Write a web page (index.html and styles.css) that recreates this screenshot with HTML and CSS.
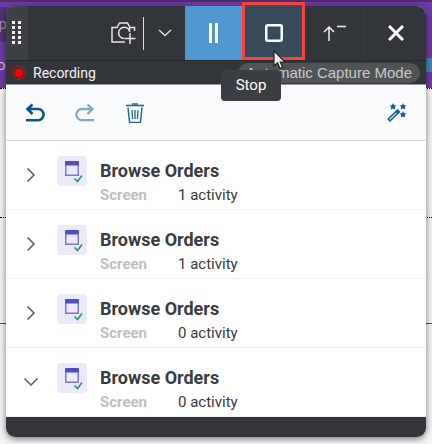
FILE: index.html
```
<!DOCTYPE html>
<html lang="en">
<head>
<meta charset="utf-8">
<title>Recorder</title>
<link rel="stylesheet" href="styles.css">
</head>
<body>
<svg class="defs" aria-hidden="true">
  <symbol id="screen" viewBox="0 0 30 30">
    <path d="M8.750 8v11.250h12.500V8" fill="none" stroke="#7b78cc" stroke-width="1.500"/>
    <rect x="8" y="5" width="14" height="4.500" rx="1" fill="#5050bd"/>
    <path d="M17.500 22.500l3 3 4.500-6" fill="none" stroke="#ebe9f9" stroke-width="4"/>
    <path d="M17.500 22.500l3 3 4.500-6" fill="none" stroke="#309765" stroke-width="1.700"/>
  </symbol>
  <symbol id="chevron" viewBox="0 0 16 16"><path d="M4.500 1.500l6.500 6.500-6.500 6.500" fill="none" stroke="currentColor" stroke-width="1.500"/></symbol>
</svg>
<div class="backdrop" aria-hidden="true">
  <div class="banner"><span class="crumb">pp</span><span class="word">o</span><i></i></div>
  <div class="band"></div>
  <div class="band blue"></div>
</div>
<main class="recorder">
  <header class="controls">
    <button class="handle" aria-label="Move">
      <svg width="12" height="24" viewBox="0 0 12 24"><path d="M2.500 0v24M8.500 0v24" stroke="#f3f3f3" stroke-width="3" stroke-dasharray="3 2"/></svg>
    </button>
    <div class="capture">
      <button aria-label="Capture screen">
        <svg width="26" height="24" viewBox="0 0 26 24" fill="none" stroke="#e5e5e5" stroke-width="1.500"><path d="M15 21H2V6.500h5L9.500 2h8L20 6.500h4.500V10"/><path d="M19.500 10A5.600 5.600 0 1 0 14 17.500M19.500 7v4"/><path d="M20 12v11M14.500 17.500h11"/></svg>
      </button>
      <span class="rule"></span>
      <button aria-label="Capture options"><svg width="14" height="8" viewBox="0 0 14 8"><path d="M1 1l6 5.500L13 1" fill="none" stroke="#e0e0e0" stroke-width="1.400"/></svg></button>
    </div>
    <button class="pause" aria-label="Pause"><svg width="12" height="20"><path d="M2.500 0v20M8.500 0v20" stroke="#fff" stroke-width="3"/></svg></button>
    <div class="stop-cell">
      <button class="stop" aria-label="Stop" aria-describedby="tip"><svg width="18" height="18"><rect x="1.250" y="1.250" width="15.500" height="15.500" rx="1.500" fill="none" stroke="#fff" stroke-width="2.500"/></svg></button>
      <div class="highlight"></div>
      <div class="tip" id="tip" role="tooltip">Stop</div>
      <svg class="pointer" width="13" height="20" viewBox="0 0 13 20"><path d="M1 1v15l3.500-3.300L7 18.500l2.700-1.200L7.200 12H12z" fill="#eee" stroke="#222" stroke-width="1.200"/></svg>
    </div>
    <button class="minimise" aria-label="Minimise"><svg width="24" height="16" viewBox="0 0 24 16"><path d="M6 16V2M1 7l5-5 5 5M14 1.500h9" fill="none" stroke="#f0f0f0" stroke-width="1.500"/></svg></button>
    <button aria-label="Close"><svg width="16" height="16" viewBox="0 0 16 16"><path d="M1 1l14 14M15 1L1 15" stroke="#fff" stroke-width="3"/></svg></button>
  </header>
  <div class="status">
    <svg width="14" height="14" viewBox="0 0 14 14"><circle cx="7" cy="7" r="6.400" fill="none" stroke="#d80d0d"/><circle cx="7" cy="7" r="4.300" fill="#f00"/></svg>
    <span>Recording</span>
    <span class="mode">Automatic Capture Mode</span>
  </div>
  <div class="tools">
    <button aria-label="Undo"><svg width="20" height="20" viewBox="0 0 20 20"><path d="M7.500 1.500L2.500 6l5 5M2.500 6H13a5.300 5.300 0 0 1 0 11.200H1" fill="none" stroke="#0a5584" stroke-width="2.600"/></svg></button>
    <button aria-label="Redo"><svg width="20" height="20" viewBox="0 0 20 20"><path d="M12.500 1.500l5 4.500-5 5M17.500 6H7a5.300 5.300 0 0 0 0 11.200h12" fill="none" stroke="#85a5c5" stroke-width="2.300"/></svg></button>
    <button aria-label="Delete"><svg width="20" height="20" viewBox="0 0 20 20" fill="none" stroke="#24658f"><path d="M1 2.500h18" stroke-width="1.600"/><path d="M7 1h6" stroke-width="1.500"/><path d="M3 4.500l1.600 15h10.800l1.600-15" stroke-width="1.500"/><path d="M7 7l.6 9M10 7v9M13 7l-.6 9" stroke-width="1.300"/></svg></button>
    <button class="wand" aria-label="Highlight"><svg width="20" height="20" viewBox="0 0 20 20"><path d="M1.500 17.500L12 7.500" stroke="#0e5787" stroke-width="4"/><path d="M2.500 16.500L9.500 10" stroke="#c7d9e8" stroke-width="1.300"/><g fill="#0e5787"><path id="star" d="M6 0l1 2.200 2.500.3-1.800 1.600.5 2.500L6 5.400 3.800 6.600l.5-2.500-1.800-1.600L5 2.200z"/><use href="#star" x="10"/><use href="#star" x="10" y="8"/></g></svg></button>
  </div>
  <ul class="list">
    <li><button aria-label="Expand"><svg width="16" height="16"><use href="#chevron"/></svg></button><svg class="tile"><use href="#screen"/></svg><div><h2>Browse Orders</h2><p><b>Screen</b><span>1 activity</span></p></div></li>
    <li><button aria-label="Expand"><svg width="16" height="16"><use href="#chevron"/></svg></button><svg class="tile"><use href="#screen"/></svg><div><h2>Browse Orders</h2><p><b>Screen</b><span>1 activity</span></p></div></li>
    <li><button aria-label="Expand"><svg width="16" height="16"><use href="#chevron"/></svg></button><svg class="tile"><use href="#screen"/></svg><div><h2>Browse Orders</h2><p><b>Screen</b><span>0 activity</span></p></div></li>
    <li><button class="open" aria-label="Collapse"><svg width="16" height="16"><use href="#chevron"/></svg></button><svg class="tile"><use href="#screen"/></svg><div><h2>Browse Orders</h2><p><b>Screen</b><span>0 activity</span></p></div></li>
  </ul>
  <footer></footer>
</main>
</body>
</html>
```
FILE: styles.css
```
* { box-sizing: border-box; }
body {
  margin: 0;
  padding: 6px;
  overflow: hidden;
  background: #f5f5f5;
  font-family: Roboto, "Liberation Sans", Arial, sans-serif;
  font-size: 15px;
  color: #383b40;
}
button {
  display: flex;
  align-items: center;
  justify-content: center;
  padding: 0;
  border: 0;
  background: none;
  color: inherit;
}
svg { display: block; }
.defs { position: absolute; width: 0; height: 0; }

.backdrop { position: absolute; inset: 0; z-index: -1; overflow: hidden; }
.banner {
  position: relative;
  height: 88px;
  border-top: 2px solid #4d2c70;
  background: #7139a4;
  color: #d9cce5;
}
.banner .crumb { position: absolute; top: 5px; left: -10px; height: 35px; line-height: 35px; background: #553078; color: #a08bb4; }
.banner .word { position: absolute; top: 54px; left: -3px; }
.banner i { position: absolute; top: 56px; right: 0; width: 6px; height: 14px; background: #4485b5; }
.band { height: 130px; border-top: 1px dotted #000; }
.band:nth-child(2) { border-bottom: 1px dotted #000; }
.blue { height: 106px; border-top: 0; border-bottom: 1px solid #245a91; }

.recorder {
  border-radius: 9px;
  background: #fff;
  box-shadow: 0 2px 7px rgba(0, 0, 0, .5);
}
.controls {
  display: grid;
  grid-template-columns: 22px 1fr 57px 63px 60px 61px;
  height: 54px;
  border-radius: 9px 9px 0 0;
  background: #32363b;
}
.handle { border-radius: 9px 0 0 0; background: #3d4145; }
.capture { display: flex; align-items: center; justify-content: flex-end; gap: 7px; padding-right: 13px; }
.rule { width: 1px; height: 33px; margin-right: 7px; background: #ddd; }
.pause { background: #5197d0; }
.stop-cell { position: relative; display: grid; background: #374a5a; }
.highlight { position: absolute; inset: -4px 0 0; z-index: 2; border: 3px solid #f94144; }
.tip {
  position: absolute;
  top: 64px;
  left: -21px;
  z-index: 3;
  width: 60px;
  line-height: 31px;
  border-radius: 4px;
  background: #3a3d42;
  color: #fff;
  text-align: center;
}
.pointer { position: absolute; top: 44px; left: 31px; z-index: 4; }
.minimise { border-right: 1px solid #3a3e43; }

.status {
  display: flex;
  align-items: center;
  gap: 7px;
  height: 25px;
  padding: 0 6px;
  border-top: 1px solid #272a2e;
  border-bottom: 1px solid #96989b;
  background: #32363b;
  color: #f2f2f2;
  font-size: 14px;
}
.mode {
  margin-left: auto;
  padding: 0 8px;
  border-radius: 10px;
  background: #515457;
  color: #c8c8c9;
  font-family: "Liberation Sans", Arial, sans-serif;
  font-size: 15px;
  line-height: 20px;
}
.tools {
  display: flex;
  align-items: center;
  gap: 30px;
  height: 56px;
  padding: 0 19px;
  border-bottom: 1px solid #d9d9d9;
  background: #fafbfd;
}
.wand { margin-left: auto; }

.list { margin: 0; padding: 0; list-style: none; }
.list li {
  display: flex;
  height: 69px;
  padding: 15px 17px 0;
  border-bottom: 1px solid #efefef;
}
.list button { width: 16px; height: 38px; margin-right: 18px; color: #55585c; }
.list .open svg { transform: rotate(90deg); }
.tile { width: 30px; height: 30px; margin-right: 13px; border-radius: 4px; background: #ebe9f9; }
h2 { margin: 5px 0; font-size: 18px; line-height: 20px; }
p { display: flex; gap: 28px; margin: 0; line-height: 18px; }
b { width: 50px; color: #bebfc1; }
footer { height: 20px; border-radius: 0 0 9px 9px; background: #32363b; }
```
